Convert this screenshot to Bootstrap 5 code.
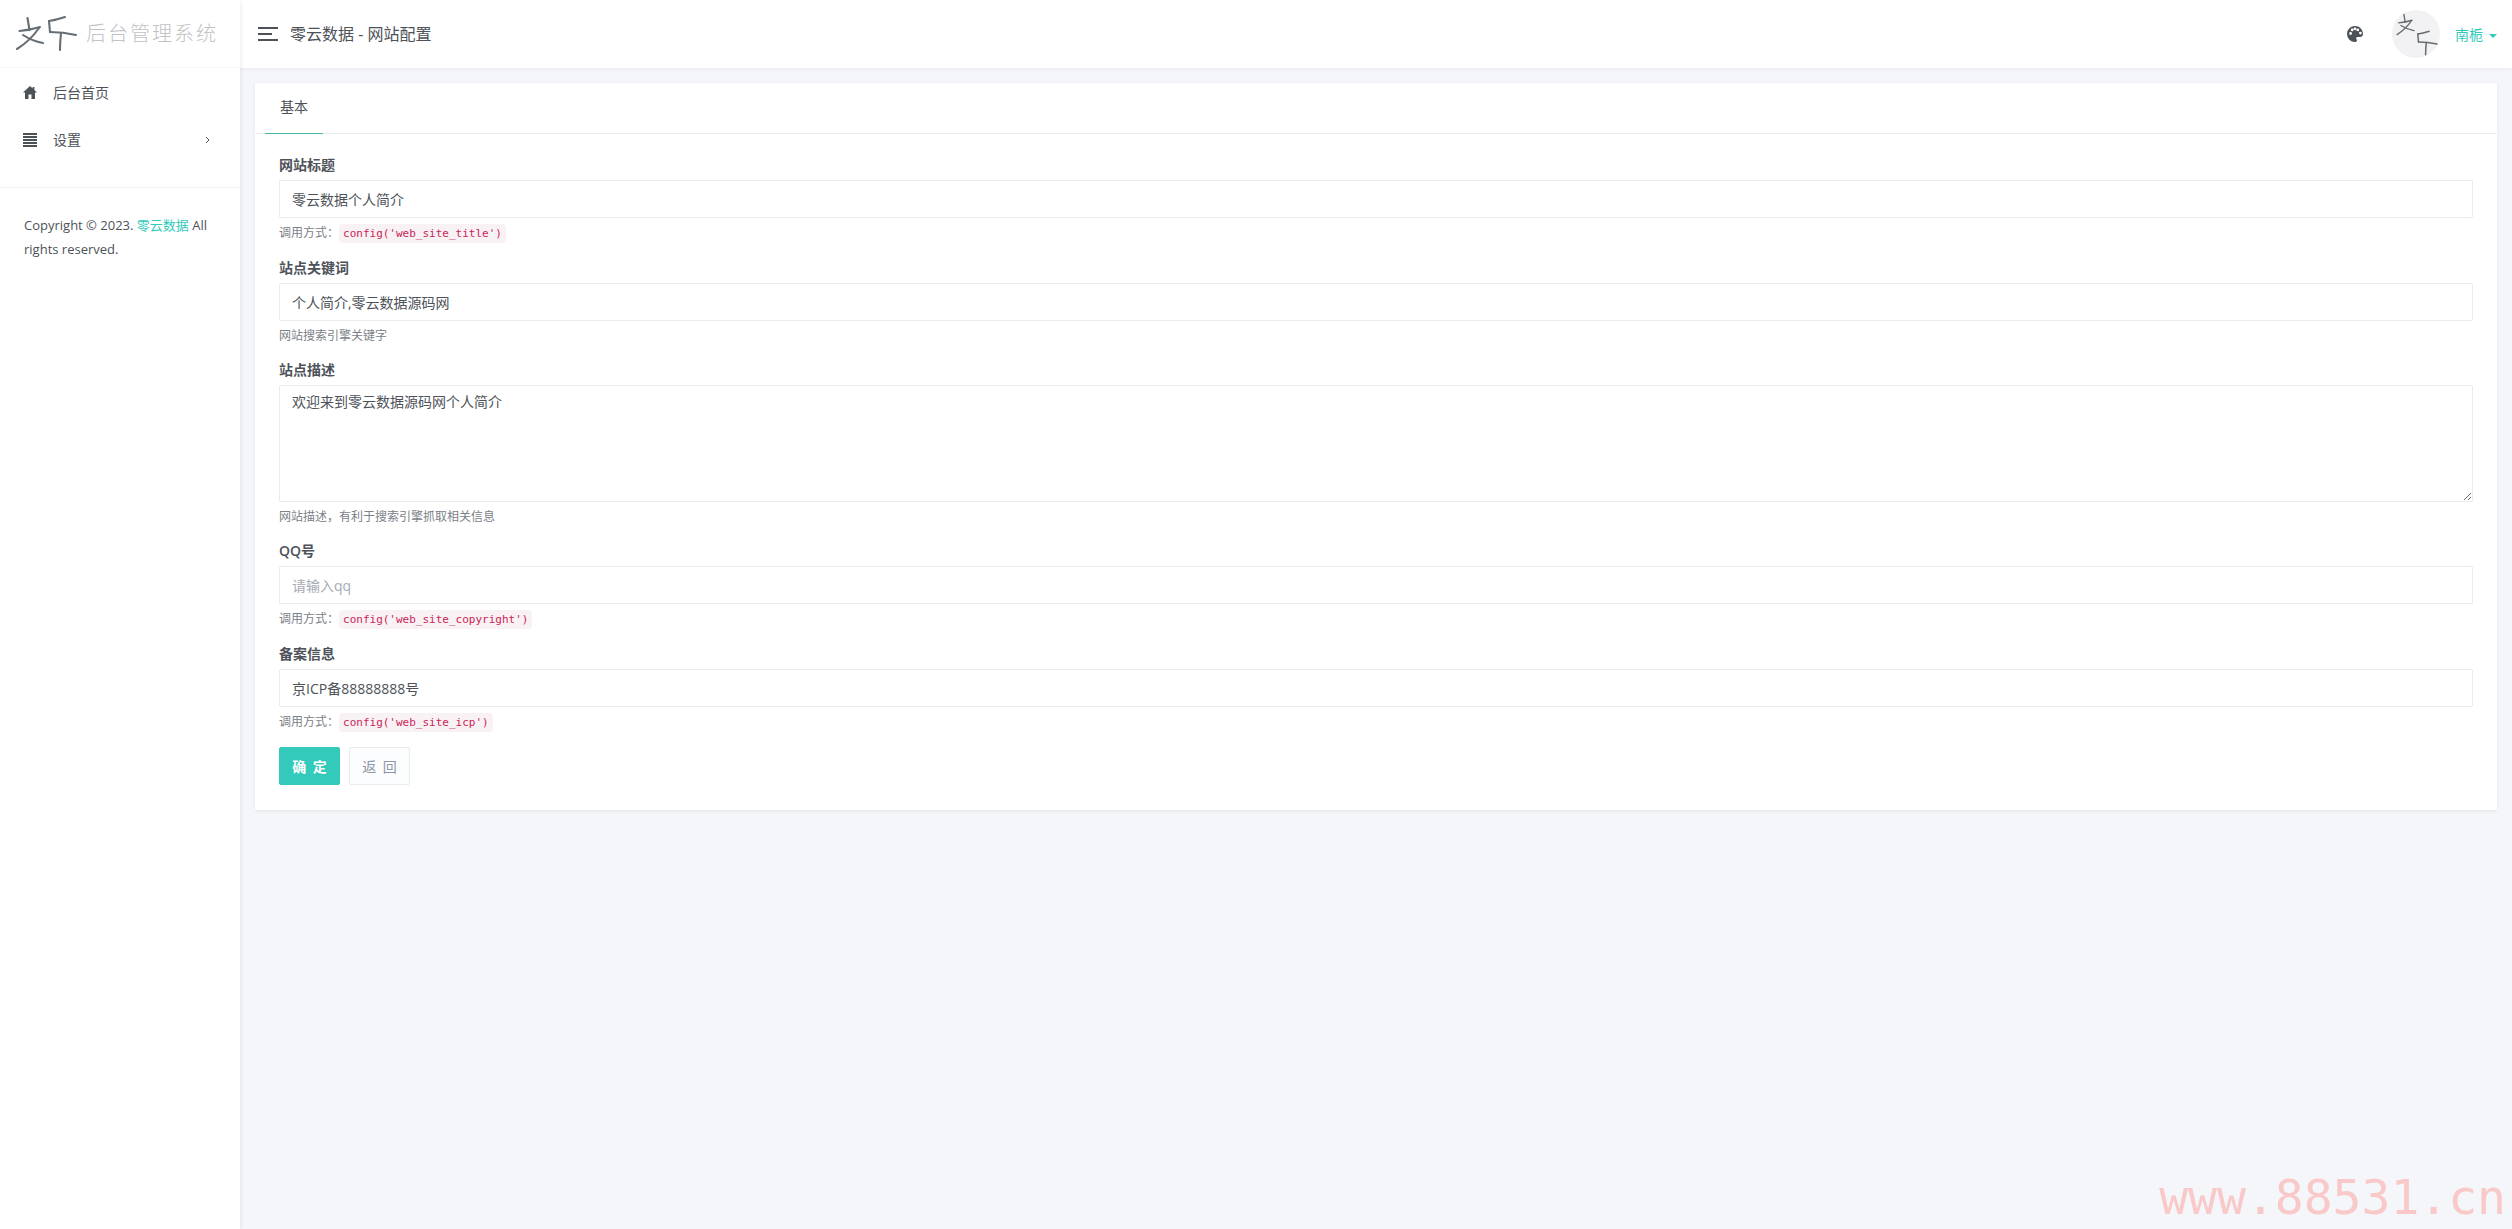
<!DOCTYPE html>
<html lang="zh-CN">
<head>
    <meta charset="UTF-8">
    <title>零云数据 - 网站配置</title>
    <link href="https://cdn.jsdelivr.net/npm/bootstrap@5.3.3/dist/css/bootstrap.min.css" rel="stylesheet">
    <style>
        html, body { height: 100%; }
        body {
            font-family: "Open Sans", "Noto Sans CJK SC", sans-serif;
            font-size: 14px;
            color: #4d5259;
            background: #f5f6fa;
        }
        .page-wrap { min-height: 100vh; }
        .side-bar {
            width: 240px;
            flex: 0 0 240px;
            background: #fff;
            box-shadow: 0 0 5px rgba(0, 0, 0, .1);
            z-index: 2;
        }
        .side-logo { height: 68px; padding-left: 16px; border-bottom: 1px solid #f7f7f9; }
        .side-logo span { font-size: 20px; font-weight: 300; letter-spacing: 2px; color: #c0c2c5; margin-left: 8px; }
        .side-menu { padding-top: 1px; height: 120px; border-bottom: 1px solid #f0f0f3; }
        .side-menu a { height: 47px; padding: 0 30px 0 23px; color: #4d5259; text-decoration: none; }
        .side-menu svg.menu-icon { width: 14px; height: 15px; margin-right: 16px; flex: none; }
        .side-copy { padding: 25px 24px; font-size: 13px; line-height: 24px; }
        .side-copy a { color: #33cabb; text-decoration: none; }
        .top-bar { height: 68px; background: #fff; box-shadow: 0 1px 5px rgba(0, 0, 0, .05); padding: 0 15px 0 18px; }
        .top-title { font-size: 16px; margin-left: 12px; }
        .user-avatar { width: 48px; height: 48px; margin: 0 15px 0 29px; }
        .user-name { color: #33cabb; text-decoration: none; }
        .user-name::after { vertical-align: 2px; margin-left: 6px; }
        .page-body { padding: 15px; }
        .cfg-card { border: 0; border-radius: 0; box-shadow: 0 1px 4px rgba(0, 0, 0, .07); }
        .cfg-tabs { padding-left: 10px; height: 51px; border-bottom: 1px solid #ebebeb; }
        .cfg-tabs .nav-link.active {
            height: 51px;
            padding: 0 15px;
            line-height: 47px;
            font-weight: 400;
            border: 0;
            border-bottom: 1px solid #48b9a8;
            border-radius: 0;
            color: #4d5259;
            background: none;
        }
        .cfg-body { padding: 21px 24px 25px; }
        .cfg-group { margin-bottom: 14px; }
        .cfg-group label { display: block; font-weight: 600; line-height: 20px; margin-bottom: 5px; }
        .cfg-group .form-control {
            height: 38px;
            padding: 5px 12px;
            font-size: 14px;
            color: #4d5259;
            border: 1px solid #ebebeb;
            border-radius: 2px;
            box-shadow: none;
        }
        .cfg-group textarea.form-control { height: 117px; }
        .cfg-group .form-control::placeholder { color: #a5acb3; }
        .cfg-help { margin-top: 5px; font-size: 12px; line-height: 20px; color: #7b8188; }
        .cfg-help.has-code { height: 21px; }
        .cfg-help code {
            font-family: "DejaVu Sans Mono", monospace;
            font-size: 11px;
            padding: 3px 4px;
            color: #cc2459;
            background: #f9f2f4;
            border-radius: 4px;
        }
        .btn-ok, .btn-back { width: 61px; height: 38px; padding: 0; font-size: 14px; border-radius: 2px; word-spacing: 3px; }
        .btn-ok { color: #fff; font-weight: 600; background: #33cabb; border-color: #33cabb; }
        .btn-back { margin-left: 9px; color: #8b95a5; background: #fcfdfe; border-color: #ebebeb; }
        .water-mark {
            position: fixed;
            right: 6px;
            bottom: 3px;
            font-family: "DejaVu Sans Mono", monospace;
            font-size: 48px;
            line-height: 58px;
            color: #f9c9c9;
        }
    </style>
</head>
<body>
<svg width="0" height="0" class="position-absolute">
    <defs>
        <g id="logo-left" fill="none" stroke="#666e73" stroke-width="2.1" stroke-linecap="round">
            <path d="M27.5 18 L29.5 30"/>
            <path d="M19.5 31 Q30 30 40 27"/>
            <path d="M39 28 Q30 41 17 49"/>
            <path d="M23 35 Q32 41 43 43"/>
        </g>
        <g id="logo-right" fill="none" stroke="#666e73" stroke-width="2.1" stroke-linecap="round">
            <path d="M49 21 Q56 20 65 17"/>
            <path d="M49 21 L50 32"/>
            <path d="M50 32 Q63 32 76 35"/>
            <path d="M61 33 Q60 42 60 50"/>
        </g>
    </defs>
</svg>
<div class="page-wrap d-flex">
    <aside class="side-bar">
        <div class="side-logo d-flex align-items-center">
            <svg width="62" height="68" viewBox="16 0 62 68"><use href="#logo-left"/><use href="#logo-right"/></svg>
            <span>后台管理系统</span>
        </div>
        <div class="side-menu">
            <a href="#" class="d-flex align-items-center">
                <svg class="menu-icon" viewBox="0 0 14 15"><path fill="#4d5259" d="M7 1 L9.6 3.4 V1.9 H11.4 V5.1 L14 7.6 H12 V14 H8.5 V9.5 H5.5 V14 H2 V7.6 H0 Z"/></svg>
                后台首页
            </a>
            <a href="#" class="d-flex align-items-center">
                <svg class="menu-icon" viewBox="0 0 14 15"><path fill="#4d5259" d="M0 1h14v2H0zM0 4h14v2H0zM0 7h14v2H0zM0 10h14v2H0zM0 13h14v2H0z"/></svg>
                <span class="flex-grow-1">设置</span>
                <svg width="5" height="8" viewBox="0 0 5 8"><path fill="none" stroke="#4d5259" d="M1 1 L4 4 L1 7"/></svg>
            </a>
        </div>
        <div class="side-copy">Copyright © 2023. <a href="#">零云数据</a> All rights reserved.</div>
    </aside>
    <div class="flex-grow-1 d-flex flex-column">
        <header class="top-bar d-flex align-items-center">
            <svg width="20" height="16" viewBox="0 0 20 16"><path fill="#4d5259" d="M0 1h20v2H0zM0 7h14v2H0zM0 13h20v2H0z"/></svg>
            <span class="top-title">零云数据 - 网站配置</span>
            <svg class="ms-auto" width="16" height="16" viewBox="0 0 16 16"><path fill="#4d5259" fill-rule="evenodd" d="M8 0a8 8 0 0 0 0 16c1.3 0 1.9-.8 1.9-1.6 0-1-.7-1.3-.7-2.1 0-.8.7-1.3 1.5-1.3H13c1.8 0 3-1.2 3-3C16 3.4 12.4 0 8 0zM3.6 8.9a1.4 1.4 0 1 1 0-2.8 1.4 1.4 0 0 1 0 2.8zm1.6-3.6a1.4 1.4 0 1 1 0-2.8 1.4 1.4 0 0 1 0 2.8zm5.6 0a1.4 1.4 0 1 1 0-2.8 1.4 1.4 0 0 1 0 2.8zm2.6 3.2a1.4 1.4 0 1 1 0-2.8 1.4 1.4 0 0 1 0 2.8zM8 4.2a1.4 1.4 0 1 1 0-2.8 1.4 1.4 0 0 1 0 2.8z"/></svg>
            <svg class="user-avatar" viewBox="0 0 48 48">
                <circle cx="24" cy="24" r="24" fill="#f2f2f4"/>
                <use href="#logo-left" transform="translate(-6 -7.3) scale(.65)"/>
                <use href="#logo-right" transform="translate(-9 9.2) scale(.71)"/>
            </svg>
            <div class="dropdown">
                <a href="#" class="user-name dropdown-toggle" data-bs-toggle="dropdown">南栀</a>
            </div>
        </header>
        <main class="page-body">
            <div class="card cfg-card">
                <ul class="nav nav-tabs cfg-tabs">
                    <li class="nav-item"><a class="nav-link active" href="#">基本</a></li>
                </ul>
                <form class="cfg-body">
                    <div class="cfg-group">
                        <label for="web_site_title">网站标题</label>
                        <input type="text" class="form-control" id="web_site_title" value="零云数据个人简介">
                        <div class="cfg-help has-code">调用方式：<code>config('web_site_title')</code></div>
                    </div>
                    <div class="cfg-group">
                        <label for="web_site_keywords">站点关键词</label>
                        <input type="text" class="form-control" id="web_site_keywords" value="个人简介,零云数据源码网">
                        <div class="cfg-help">网站搜索引擎关键字</div>
                    </div>
                    <div class="cfg-group">
                        <label for="web_site_description">站点描述</label>
                        <textarea class="form-control" id="web_site_description">欢迎来到零云数据源码网个人简介</textarea>
                        <div class="cfg-help">网站描述，有利于搜索引擎抓取相关信息</div>
                    </div>
                    <div class="cfg-group">
                        <label for="web_site_copyright">QQ号</label>
                        <input type="text" class="form-control" id="web_site_copyright" placeholder="请输入qq">
                        <div class="cfg-help has-code">调用方式：<code>config('web_site_copyright')</code></div>
                    </div>
                    <div class="cfg-group">
                        <label for="web_site_icp">备案信息</label>
                        <input type="text" class="form-control" id="web_site_icp" value="京ICP备88888888号">
                        <div class="cfg-help">调用方式：<code>config('web_site_icp')</code></div>
                    </div>
                    <div class="d-flex">
                        <button type="submit" class="btn btn-ok">确 定</button>
                        <button type="button" class="btn btn-back">返 回</button>
                    </div>
                </form>
            </div>
        </main>
    </div>
</div>
<div class="water-mark">www.88531.cn</div>
<script src="https://cdn.jsdelivr.net/npm/bootstrap@5.3.3/dist/js/bootstrap.bundle.min.js"></script>
</body>
</html>
